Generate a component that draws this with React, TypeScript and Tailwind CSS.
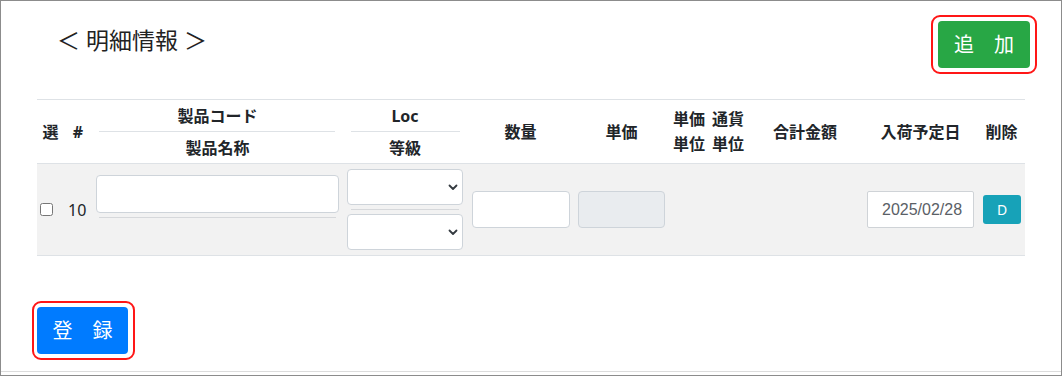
import React from 'react';

const Chevron: React.FC = () => (
  <svg
    className="pointer-events-none absolute right-[5px] top-1/2 -translate-y-1/2"
    width="10"
    height="8"
    viewBox="0 0 10 8"
    fill="none"
  >
    <path d="M1.5 2.5 5 6l3.5-3.5" stroke="#343a40" strokeWidth="1.8" strokeLinecap="round" strokeLinejoin="round" />
  </svg>
);

const Select: React.FC = () => (
  <div className="relative w-[116px] h-[36px]">
    <select className="appearance-none w-full h-full border border-[#ced4da] rounded-[4px] bg-white px-2 text-[15px] outline-none" />
    <Chevron />
  </div>
);

const App: React.FC = () => {
  return (
    <div
      className="w-[1062px] h-[376px] border border-[#8c8c8c] bg-white flex flex-col text-[#212529]"
      style={{ fontFamily: '"Noto Sans", "Noto Sans CJK JP", sans-serif' }}
    >
      {/* header */}
      <div className="flex justify-between items-start pl-[56px] pr-[24px] pt-[14px]">
        <h2 className="mt-[8px] text-[23px] leading-[34px] font-normal text-[#222]">＜ 明細情報 ＞</h2>
        <div className="border-2 border-[#ff1616] rounded-[9px] px-[5px] py-[4px]">
          <button className="w-[92px] h-[47px] bg-[#28a745] text-white text-[20px] rounded-[4px] leading-none">
            追　加
          </button>
        </div>
      </div>

      {/* table */}
      <div className="px-[36px] mt-[25px]">
        <table className="w-[988px] table-fixed border-collapse">
          <colgroup>
            <col className="w-[27px]" />
            <col className="w-[28px]" />
            <col className="w-[251px]" />
            <col className="w-[124px]" />
            <col className="w-[107px]" />
            <col className="w-[95px]" />
            <col className="w-[40px]" />
            <col className="w-[38px]" />
            <col className="w-[116px]" />
            <col className="w-[115px]" />
            <col className="w-[47px]" />
          </colgroup>
          <thead>
            <tr className="h-[64px] border-t border-[#dee2e6] text-[16px] font-bold text-center">
              <th className="align-middle p-0">選</th>
              <th className="align-middle p-0">#</th>
              <th className="align-top p-0 pt-[4px]">
                <div className="h-[24px] leading-[24px]">製品コード</div>
                <div className="mt-[3px] ml-[7px] mr-[8px] border-t border-[#dee2e6]" />
                <div className="mt-[4px] h-[24px] leading-[24px]">製品名称</div>
              </th>
              <th className="align-top p-0 pt-[4px]">
                <div className="h-[24px] leading-[24px]">Loc</div>
                <div className="mt-[3px] ml-[8px] mr-[7px] border-t border-[#dee2e6]" />
                <div className="mt-[4px] h-[24px] leading-[24px]">等級</div>
              </th>
              <th className="align-middle p-0">数量</th>
              <th className="align-middle p-0">単価</th>
              <th className="align-middle p-0 leading-[25px]">
                単価
                <br />
                単位
              </th>
              <th className="align-middle p-0 leading-[25px]">
                通貨
                <br />
                単位
              </th>
              <th className="align-middle p-0">合計金額</th>
              <th className="align-middle p-0">入荷予定日</th>
              <th className="align-middle p-0">削除</th>
            </tr>
          </thead>
          <tbody>
            <tr className="h-[92px] border-t border-b border-[#dee2e6] bg-[#f2f2f2]">
              <td className="align-middle p-0 pl-[3px]">
                <input type="checkbox" className="block w-[13px] h-[13px] m-0" />
              </td>
              <td className="align-middle p-0 pl-[4px] text-[16px]">10</td>
              <td className="align-top p-0 pt-[11px] px-[4px]">
                <input className="block w-[243px] h-[38px] border border-[#ced4da] rounded-[4px] bg-white" />
                <div className="mt-[4px] mx-[3px] border-t border-[#d6d8db]" />
              </td>
              <td className="align-middle p-0 px-[4px]">
                <Select />
                <div className="my-[4px] mx-[4px] border-t border-[#d6d8db]" />
                <Select />
              </td>
              <td className="align-middle p-0 pl-[5px]">
                <input className="block w-[98px] h-[37px] border border-[#ced4da] rounded-[4px] bg-white" />
              </td>
              <td className="align-middle p-0 pl-[4px]">
                <input
                  disabled
                  className="block w-[87px] h-[37px] border border-[#ced4da] rounded-[4px] bg-[#e9ecef]"
                />
              </td>
              <td className="p-0" />
              <td className="p-0" />
              <td className="p-0" />
              <td className="align-middle p-0 pl-[4px]">
                <input
                  readOnly
                  value="2025/02/28"
                  className="block w-[107px] h-[37px] border border-[#cfd3d7] rounded-[2px] bg-white pl-[14px] text-[16px] text-[#5a6066]"
                  style={{ fontFamily: '"Liberation Sans", sans-serif' }}
                />
              </td>
              <td className="align-middle p-0 pl-[5px]">
                <button className="block w-[38px] h-[29px] bg-[#17a2b8] text-white text-[14px] rounded-[3px] leading-none">
                  D
                </button>
              </td>
            </tr>
          </tbody>
        </table>
      </div>

      {/* footer */}
      <div className="mt-[45px] pl-[31px]">
        <div className="inline-block border-2 border-[#ff1616] rounded-[9px] pl-[3px] pr-[5px] py-[4px]">
          <button className="block w-[91px] h-[47px] bg-[#007bff] text-white text-[20px] rounded-[4px] leading-none">
            登　録
          </button>
        </div>
      </div>
      <div className="mt-auto mb-[3px] border-t border-[#dcdcdc]" />
    </div>
  );
};

export default App;
